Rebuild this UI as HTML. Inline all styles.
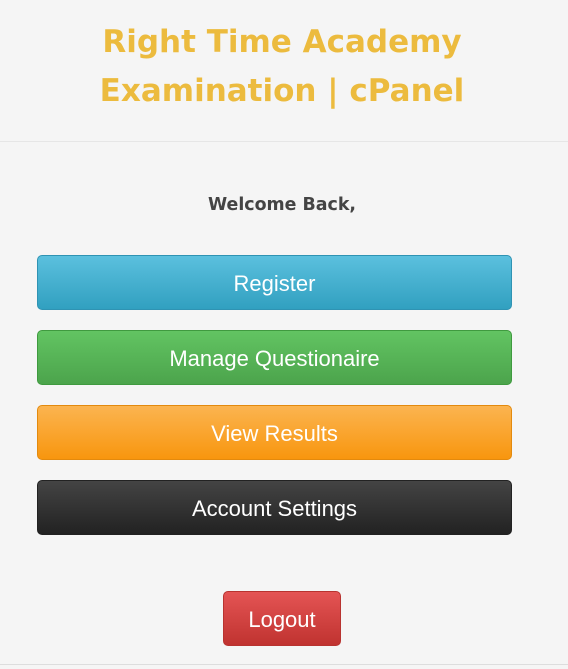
<!DOCTYPE html>
<html><head><style>
body{margin:0;width:568px;height:669px;background:#f5f5f5;font-family:"Liberation Sans",Arial,sans-serif;position:relative;overflow:hidden}
.t{position:absolute;left:0;width:564px;text-align:center;color:#ecbb3e;font:bold 31px "DejaVu Sans",Verdana,sans-serif;}
.hr{position:absolute;left:0;width:568px;top:141px;height:1px;background:#e6e6e6}
.w{position:absolute;top:195px;width:564px;text-align:center;font:bold 17.4px "DejaVu Sans",Verdana,sans-serif;color:#444}
.b{position:absolute;left:37px;width:473px;height:53px;border-radius:5px;color:#fff;font-size:22px;text-align:center;line-height:55px;border:1px solid}
</style></head><body>
<div class="t" style="top:24px">Right Time Academy</div>
<div class="t" style="top:73px">Examination | cPanel</div>
<div class="hr"></div>
<div class="w">Welcome Back,</div>
<div class="b" style="top:255px;background:linear-gradient(#5bc0de,#31a0c0);border-color:#2f93b3">Register</div>
<div class="b" style="top:330px;background:linear-gradient(#62c462,#4ca44c);border-color:#3f9a3f">Manage Questionaire</div>
<div class="b" style="top:405px;background:linear-gradient(#fbb450,#f8960e);border-color:#e38a0e">View Results</div>
<div class="b" style="top:480px;background:linear-gradient(#444,#222);border-color:#222">Account Settings</div>
<div class="b" style="top:591px;left:223px;width:116px;background:linear-gradient(#e45454,#c03330);border-color:#b83330">Logout</div>
<div style="position:absolute;top:664px;left:0;width:568px;height:1px;background:#ddd"></div>
</body></html>
